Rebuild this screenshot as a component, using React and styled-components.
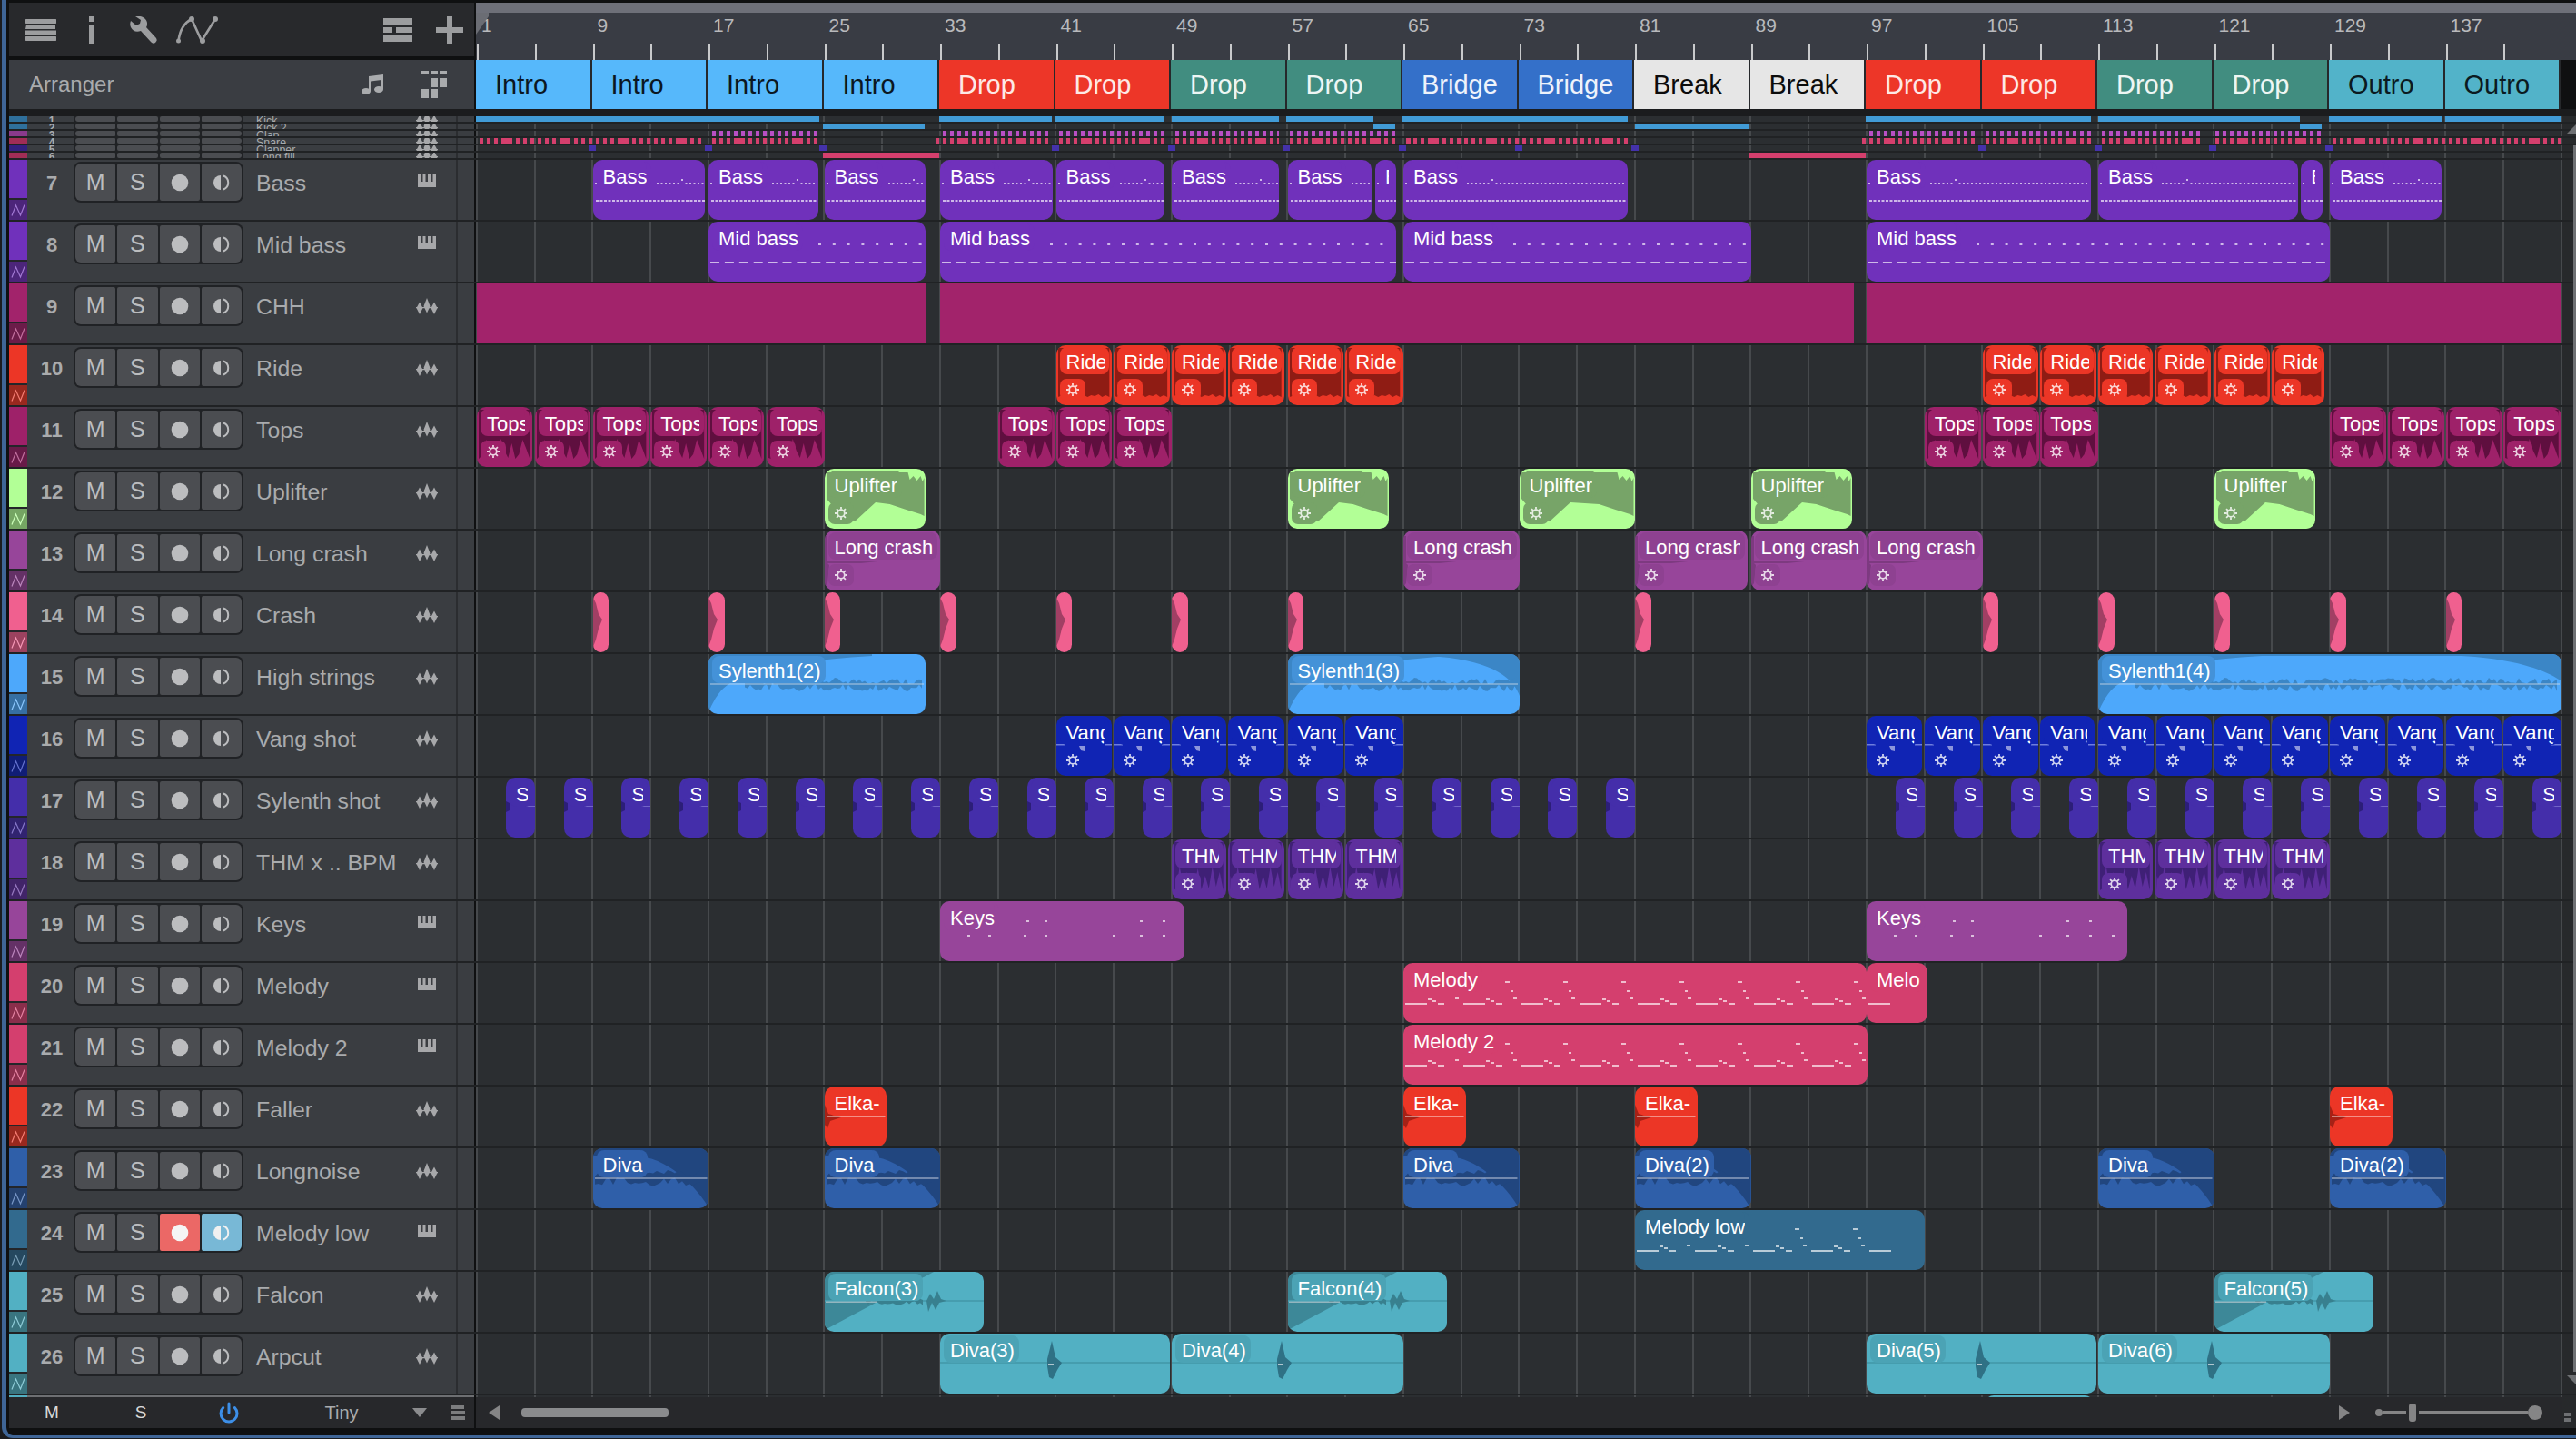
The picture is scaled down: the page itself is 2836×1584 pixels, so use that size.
import React from "react";
import styled, { createGlobalStyle } from "styled-components";
import { Power } from "lucide-react";

const BAR = 15.9375;
const xOf = (bar) => 1 + (bar - 1) * BAR;

const GlobalStyle = createGlobalStyle`
  html, body {
    margin: 0;
    padding: 0;
    background: #1b1c1f;
  }
  body {
    font-family: "Liberation Sans", Arial, sans-serif;
    overflow: hidden;
  }
`;

const Frame = styled.div`
  width: 2836px;
  height: 1584px;
  box-sizing: border-box;
  padding: 0 0 1px 2px;
`;

const Window = styled.div`
  position: relative;
  height: 100%;
  box-sizing: border-box;
  border-left: 5px solid #3f6596;
  border-bottom: 3px solid #3f6596;
  border-bottom-left-radius: 12px;
  background: #0f1011;
  padding: 3px 0 8px 3px;
  overflow: hidden;
`;

const Head = styled.div`
  display: grid;
  grid-template-columns: 514px 1fr;
  height: 117px;
`;

const HeadLeft = styled.div`
  display: flex;
  flex-direction: column;
  gap: 4px;
  border-right: 2px solid #0f1011;
`;

const Toolbar = styled.div`
  height: 59px;
  flex: none;
  background: #28292c;
  display: flex;
  align-items: center;
  padding: 0 12px 0 18px;
  color: #9c9d9f;
`;

const ToolIcon = styled.svg`
  display: block;
  flex: none;
  margin-left: ${(p) => p.$gap || 0}px;
`;

const Spacer = styled.div`
  flex: 1;
`;

const ArrangerBar = styled.div`
  height: 54px;
  background: #3a3d42;
  display: flex;
  align-items: center;
  padding-left: 22px;
  padding-right: 30px;
  font-size: 24px;
  color: #a9abad;
`;

const HeadRight = styled.div`
  display: flex;
  flex-direction: column;
  min-width: 0;
`;

const Ruler = styled.div`
  position: relative;
  height: 63px;
  flex: none;
  background: #393c44;
  border-top: 11px solid #6e7079;
  box-sizing: border-box;
  display: flex;
  padding-left: 1px;
`;

const Marker = styled.svg`
  position: absolute;
  left: 0;
  top: 0;
`;

const BarCell = styled.div`
  width: 127.5px;
  flex: none;
  display: flex;
  flex-direction: column;
  justify-content: space-between;
`;

const BarNumber = styled.span`
  font-size: 21px;
  line-height: 22px;
  margin: 3px 0 0 5px;
  color: #b8b9bc;
`;

const TickRow = styled.div`
  display: flex;
  height: 18px;
`;

const Tick = styled.i`
  display: block;
  width: 50%;
  box-sizing: border-box;
  border-left: 2px solid #c9cacc;
`;

const Sections = styled.div`
  display: flex;
  height: 54px;
  flex: none;
`;

const Section = styled.div`
  width: 127.5px;
  flex: none;
  box-sizing: border-box;
  border-right: 2px solid #26282b;
  background: ${(p) => p.$bg};
  color: ${(p) => p.$fg};
  font-size: 29px;
  line-height: 54px;
  padding-left: 21px;
`;

const HeadGap = styled.div`
  height: 8px;
  background: #1b1c1e;
`;

const Tracks = styled.div`
  display: flex;
  flex-direction: column;
  gap: 2px;
  background: #202224;
`;

const Row = styled.div`
  display: grid;
  grid-template-columns: 514px 2297px 1fr;
  height: ${(p) => (p.$tiny ? 6 : 66)}px;
`;

const PeekRow = styled(Row)`
  height: 2px;
`;

const TrackHeader = styled.div`
  display: flex;
  align-items: flex-start;
  box-sizing: border-box;
  background: #3a3d41;
  border-right: 2px solid #0f1011;
  overflow: hidden;
  height: 100%;
`;

const PeekHeader = styled(TrackHeader)`
  background: #6d6f72;
`;

const Swatch = styled.div`
  width: 20px;
  flex: none;
  height: 100%;
  display: flex;
  flex-direction: column;
  gap: 2px;
  background: #24262a;
`;

const SwatchTop = styled.div`
  flex: 1;
  background: ${(p) => p.$color};
`;

const SwatchBottom = styled.div`
  height: 22px;
  flex: none;
  display: flex;
  align-items: center;
  justify-content: center;
  background: color-mix(in srgb, ${(p) => p.$color} 62%, #111);
  color: color-mix(in srgb, ${(p) => p.$color} 65%, #fff);
`;

const TrackNumber = styled.div`
  width: 51px;
  flex: none;
  text-align: center;
  font-size: ${(p) => (p.$tiny ? 12 : 22)}px;
  font-weight: 700;
  color: #a9abad;
  padding-left: 3px;
  box-sizing: border-box;
  line-height: ${(p) => (p.$tiny ? "12px" : "51px")};
  margin-top: ${(p) => (p.$tiny ? -1 : 0)}px;
`;

const ButtonGroup = styled.div`
  width: 187px;
  flex: none;
  box-sizing: border-box;
  display: flex;
  gap: 2px;
  height: ${(p) => (p.$tiny ? 6 : 45)}px;
  margin-top: ${(p) => (p.$tiny ? 0 : 2)}px;
  padding: ${(p) => (p.$tiny ? "0 2px" : "2px")};
  background: #202225;
  border-radius: ${(p) => (p.$tiny ? 0 : 8)}px;
`;

const TrackButton = styled.button`
  flex: 1;
  min-width: 0;
  margin: 0;
  padding: 0;
  border: none;
  display: flex;
  align-items: center;
  justify-content: center;
  background: ${(p) => p.$on || "#4b4d51"};
  color: #bcbdbf;
  font-family: inherit;
  font-size: 25px;
  border-radius: 2px;
  &:first-child {
    border-radius: 6px 2px 2px 6px;
  }
  &:last-child {
    border-radius: 2px 6px 6px 2px;
  }
`;

const TrackName = styled.div`
  flex: 1;
  min-width: 0;
  padding-left: 14px;
  font-size: ${(p) => (p.$tiny ? 12.4 : 24.8)}px;
  color: #a9abad;
  white-space: nowrap;
  line-height: ${(p) => (p.$tiny ? "12px" : "52px")};
  margin-top: ${(p) => (p.$tiny ? -1 : 0)}px;
`;

const KindIcon = styled.div`
  width: 24px;
  flex: none;
  margin-right: 20px;
  color: #a7a8aa;
  display: flex;
  justify-content: center;
  margin-top: ${(p) => (p.$tiny ? -6 : 0)}px;
  padding-top: ${(p) => (p.$tiny ? 0 : 16)}px;
`;

const Gutter = styled.div`
  width: 18px;
  flex: none;
  height: 100%;
  border-left: 2px solid #2b2d30;
`;

const Lane = styled.div`
  position: relative;
  overflow: hidden;
  background-color: #2b2e31;
  background-image: repeating-linear-gradient(
    to right,
    #46494c 0,
    #46494c 2px,
    transparent 2px,
    transparent 63.75px
  );
`;

const RightStrip = styled.div`
  background: #27292b;
`;

const TinyClip = styled.div`
  position: absolute;
  top: 0;
  height: 6px;
  background: ${(p) => p.$fill};
`;

const Clip = styled.div`
  position: absolute;
  top: 0;
  height: 66px;
  display: flex;
  flex-direction: column;
  align-items: flex-start;
  padding-top: 2px;
  box-sizing: border-box;
  overflow: hidden;
  border-radius: ${(p) => (p.$flat ? 0 : 10)}px;
  background: ${(p) => p.$color};
  color: #fff;
`;

const Art = styled.svg`
  position: absolute;
  left: 0;
  top: 0;
`;

const ClipLabel = styled.div`
  position: relative;
  box-sizing: border-box;
  max-width: calc(100% - 7px);
  flex: none;
  margin-left: 4px;
  padding-left: 7px;
  height: 30px;
  line-height: 33px;
  font-size: 22px;
  white-space: nowrap;
  overflow: hidden;
  border-radius: 8px;
  border-right: 5px solid ${(p) => p.$chip};
  background: ${(p) => p.$chip};
`;

const GearChip = styled.div`
  position: relative;
  width: 28px;
  height: 24px;
  flex: none;
  margin: 5px 0 0 4px;
  display: flex;
  align-items: center;
  justify-content: center;
  border-radius: 7px;
  background: ${(p) => p.$chip};
`;

const Footer = styled.div`
  display: grid;
  grid-template-columns: 514px 2297px 1fr;
  height: 34px;
  background: #27282b;
`;

const FooterLeft = styled.div`
  display: flex;
  align-items: center;
  border-right: 2px solid #0f1011;
  color: #a9abad;
  font-size: 20px;
`;

const FooterCell = styled.div`
  width: ${(p) => p.$w}px;
  flex: none;
  text-align: center;
  font-size: ${(p) => p.$size || 20}px;
  color: ${(p) => p.$fg || "#a9abad"};
  display: flex;
  justify-content: center;
  box-sizing: border-box;
`;

const FooterRight = styled.div`
  display: flex;
  align-items: center;
  padding-left: 14px;
  padding-right: 14px;
`;

const ScrollThumb = styled.div`
  width: 162px;
  height: 10px;
  margin-left: 24px;
  border-radius: 4px;
  background: #8a8b8d;
`;

const ZoomTrack = styled.div`
  display: flex;
  align-items: center;
  width: 184px;
  margin-left: 28px;
  margin-right: 8px;
  flex: none;
`;

const ZoomDot = styled.div`
  width: ${(p) => p.$size}px;
  height: ${(p) => p.$size}px;
  flex: none;
  border-radius: 50%;
  background: #858586;
`;

const ZoomLine = styled.div`
  height: 4px;
  flex: ${(p) => p.$grow};
  background: #858586;
`;

const ZoomHandle = styled.div`
  width: 8px;
  height: 20px;
  margin: 0 3px;
  flex: none;
  border-radius: 3px;
  background: #858586;
`;

const VScroll = styled.svg`
  position: absolute;
  right: 0;
  top: 0;
`;

// small drawings

const GearIcon = () => (
  <svg width="16" height="16" viewBox="0 0 16 16" stroke="rgba(255,255,255,.8)" fill="none">
    <circle cx="8" cy="8" r="3.8" strokeWidth="1.8" />
    {[0, 45, 90, 135, 180, 225, 270, 315].map((a) => (
      <line key={a} x1="8" y1="3.6" x2="8" y2="1" strokeWidth="1.8" transform={`rotate(${a} 8 8)`} />
    ))}
  </svg>
);

const PianoIcon = () => (
  <svg width="20" height="14" viewBox="0 0 20 14" fill="currentColor" style={{ display: "block" }}>
    <path d="M0 0h3v8h2.5V0h3v8H11V0h3v8h2.5V0H20v14H0z" />
  </svg>
);

const WaveIcon = () => (
  <svg width="24" height="18" viewBox="0 0 24 18" fill="currentColor" style={{ display: "block" }}>
    <path d="M4 4.500l3.500 6.500L4 18 .5 11zM12 0l3.500 9L12 16.500 8.500 9zM20 4.500l3.500 6.500L20 18l-3.500-7z" />
    <path d="M0 10h24v1.200H0z" />
  </svg>
);

const MonitorIcon = ({ fill }) => (
  <svg width="20" height="20" viewBox="0 0 20 20">
    <path d="M9 2a8 8 0 0 0 0 16z" fill={fill} />
    <path d="M12 2.500a8 8 0 0 1 0 15" fill="none" stroke={fill} strokeWidth="2" />
  </svg>
);

const RecordDot = ({ fill }) => (
  <svg width="20" height="20" viewBox="0 0 20 20">
    <circle cx="10" cy="10" r="9.300" fill={fill} />
  </svg>
);

const noise = (i) => Math.abs(Math.sin(i * 12.9898) * 43758.5453) % 1;

const band = (x0, x1, yc, up, down, seed = 1, step = 3) => {
  const top = [];
  const bottom = [];
  for (let x = x0, i = seed; x <= x1; x += step, i++) {
    top.push(`${x},${(yc - noise(i) * up).toFixed(1)}`);
    bottom.unshift(`${x},${(yc + noise(i + 50) * down).toFixed(1)}`);
  }
  return [...top, ...bottom].join(" ");
};

const spiky = (w, peaks, left = 2, right = 3, top = 3) => {
  const pts = [`${left},${top}`, `${w - right},${top}`];
  const n = Math.floor((w - left - right) / 4);
  for (let i = 0; i <= n; i++) {
    const x = w - right - i * 4;
    pts.push(`${x},${peaks[i % peaks.length]}`);
  }
  pts.push(`${left},56`);
  return pts.join(" ");
};

const rects = (items, fill) =>
  items.map(([x, y, w, h = 2], i) => <rect key={i} x={x} y={y} width={w} height={h} fill={fill} />);

const steps = (from, to, step) => {
  const out = [];
  for (let x = from; x < to; x += step) out.push(x);
  return out;
};

const NOTE = "rgba(255,255,255,.66)";

const melodyBits = (w, { limit = w - 2, topFrom = 0 }) => {
  const items = [];
  for (let c = 0; c * 64 < w; c++) {
    const o = c * 64;
    items.push([o + 2, 44, 24], [o + 27, 39, 4], [o + 32, 41, 4], [o + 38, 44, 7], [o + 57, 38, 4]);
    if (c >= topFrom) items.push([o + 48, 20, 5], [o + 54, 30, 3]);
  }
  return items.filter((it) => it[0] < limit);
};

const ART = {
  bass: (w) =>
    rects(
      [
        [2, 25, 2],
        ...steps(70, w - 2, 4.5).map((x) => [x, Math.abs(x - 97) < 2.2 ? 21 : 25, 2]),
        ...steps(3, w - 2, 4.5).map((x) => [x, 44, 3]),
      ],
      NOTE
    ),
  midbass: (w) =>
    rects(
      [...steps(121, w - 2, 15.8).map((x) => [x, 24, 3]), ...steps(2, w - 2, 15.9).map((x) => [x, 44, 10])],
      NOTE
    ),
  melody: (w, c) => rects(melodyBits(w, c), NOTE),
  keys: () =>
    rects(
      [95, 115, 220, 245].map((x) => [x, 21, 3]).concat([30, 53, 92, 115, 190, 220, 245, 270].map((x) => [x, 37, 3])),
      NOTE
    ),
  ride: (w) => <polygon points={spiky(w, [57, 55, 57, 54, 56, 55], 2, 3)} fill="#8f1c14" />,
  tops: (w) => <polygon points={spiky(w, [57, 46, 36, 52, 57, 40, 56, 48, 35, 54], 2, 3)} fill="#5f0f3f" />,
  thm: (w) => <polygon points={spiky(w, [56, 36, 52, 30, 54, 40, 55, 32, 50], 2, 3)} fill="#3f2076" />,
  uplifter: (w) => (
    <polygon
      fill="#77a468"
      points={`2,4 ${w - 20},4 ${w - 18},12 ${w - 14},8 ${w - 10},13 ${w - 6},8 ${w - 4},14 ${w - 2},10 ${w - 2},52 ${
        w - 6
      },50 ${w - 22},45 ${w - 40},39 56,37 33,58 8,40 2,33`}
    />
  ),
  longcrash: () => <polygon fill="#7d3a80" points="0,6 3,6 3,33 58,34 40,36 3,36 5,38 3,58 0,62" />,
  crash: () => <polygon fill="#a13f64" points="0,6 3,12 6,24 10,30 6,40 3,52 0,60" />,
  vang: (w) => (
    <>
      <rect x="0" y="31" width="10" height="1.5" fill="rgba(190,200,255,.55)" />
      <rect x="53" y="31" width={w} height="1.5" fill="rgba(190,200,255,.55)" />
      <polygon points="25,33 31,33 31,39 27,38" fill="#8d96db" />
    </>
  ),
  shot: () => (
    <>
      <polygon points="0,26 4,28 4,36 0,38" fill="#2c1e78" />
      <rect x="22" y="31" width="10" height="1" fill="rgba(200,200,255,.35)" />
    </>
  ),
  sylenth: (w, c) => (
    <>
      <path
        fill="#3b86c6"
        d={
          c.fadeOut
            ? `M0 64C8 46 14 38 24 32C60 12 120 6 180 2L${w - c.fadeOut} 2C${w - c.fadeOut / 3} 6 ${w - 8} 24 ${w} ${
                c.fadeEnd
              }V0H0z`
            : `M0 64C8 46 14 38 24 32C60 12 120 6 180 2V0H0z`
        }
      />
      <polygon points={band(40, w - 3, 33, 7, 8, 3)} fill="#3b86c6" />
      <rect x="2" y="32" width={w - 4} height="2" fill="rgba(205,220,230,.42)" />
    </>
  ),
  diva: (w) => (
    <>
      <path fill="#21467f" d={`M0 0H${w}V66C${w - 15} 40 ${w - 45} 14 ${w - 70} 10L0 8z`} />
      <polygon points={band(2, w - 8, 32, 8, 10, 7, 4)} fill="#21467f" />
      <rect x="2" y="32" width={w - 4} height="2" fill="rgba(205,212,225,.48)" />
    </>
  ),
  elka: (w) => (
    <>
      <polygon points="0,20 4,30 18,34 6,38 3,46 0,42" fill="#a62116" />
      <rect x="2" y="32" width={w - 4} height="2" fill="rgba(255,255,255,.45)" />
    </>
  ),
  falcon: (w) => (
    <>
      <polygon points="0,64 120,0 0,0" fill="#3d8898" />
      <rect x="0" y="31" width={w} height="2" fill="#469daf" />
      <polygon points={band(45, 110, 32, 3, 5, 11)} fill="#38808f" />
      <polygon points="112,32 116,24 120,30 124,21 128,30 134,32 126,34 122,42 118,34 114,44" fill="#38808f" />
      <rect x="1" y="32.500" width="56" height="1.500" fill="rgba(205,212,215,.6)" />
    </>
  ),
  arp: (w, c) => {
    const x = c.blob;
    return (
      <>
        <rect x="0" y="31" width={w} height="2" fill="#459dae" />
        <polygon
          fill="#2f7185"
          points={`${x},8 ${x + 4},26 ${x + 11},32 ${x + 6},40 ${x + 1},50 ${x - 3},48 ${x - 5},36 ${x - 5},28`}
        />
        <rect x={x - 4} y="33" width="6" height="1.500" fill="rgba(210,220,225,.8)" />
      </>
    );
  },
};

const ranges = (label, list) => list.map(([from, to, extra]) => ({ from, to, label, ...extra }));

const RIDES = [
  [41, 44.85],
  [45, 48.9],
  [49, 52.75],
  [52.88, 56.75],
  [57, 60.85],
  [61, 64.97],
];
const RIDES_B = [
  [105, 108.85],
  [109, 112.9],
  [113, 116.75],
  [116.88, 120.75],
  [121, 124.85],
  [125, 128.6],
];
const VANGS_B = [
  [97, 100.85],
  [101, 104.85],
  [105, 108.85],
  [109, 112.75],
  [113, 116.85],
  [117, 120.85],
  [121, 124.85],
  [125, 128.85],
  [129, 132.85],
  [133, 136.85],
  [137, 140.85],
  [141, 145],
];
const THM_BARS = [
  [49, 52.75],
  [52.88, 56.75],
  [57, 60.85],
  [61, 64.97],
  [113, 116.75],
  [116.88, 120.75],
  [121, 124.85],
  [125, 129],
];

const shots = [...steps(3, 80, 4), ...steps(99, 144, 4)].map((b) => [b, b + 2]);
const crashes = [9, 17, 25, 33, 41, 49, 57, 81, 105, 113, 121, 129, 137].map((b) => [b, b + 1.1]);

const TINY_TRACKS = [
  {
    n: 1,
    name: "Kick",
    color: "#2f709c",
    fill: "#419bd6",
    spans: [
      [524, 902],
      [1034, 1158],
      [1162, 1282],
      [1290, 1408],
      [1416, 1512],
      [1544, 1792],
      [2054, 2302],
      [2310, 2532],
      [2564, 2688],
      [2692, 2820],
    ],
  },
  {
    n: 2,
    name: "Kick 2",
    color: "#2f709c",
    fill: "#419bd6",
    spans: [
      [906, 1018],
      [1512, 1536],
      [1800, 1926],
      [2532, 2556],
    ],
  },
  {
    n: 3,
    name: "Clap",
    color: "#8a3a8c",
    fill: "repeating-linear-gradient(to right, #b94fc4 0, #b94fc4 4.5px, transparent 4.5px, transparent 8px)",
    spans: [
      [784, 899],
      [1038, 1154],
      [1166, 1282],
      [1294, 1408],
      [1420, 1536],
      [2058, 2174],
      [2186, 2302],
      [2314, 2427],
      [2439, 2556],
    ],
  },
  {
    n: 4,
    name: "Snare",
    color: "#a12d56",
    fill: "repeating-linear-gradient(to right, #d53f6d 0, #d53f6d 4.5px, transparent 4.5px, transparent 8px), repeating-linear-gradient(to right, transparent 0, transparent 24px, #d53f6d 24px, #d53f6d 36px, transparent 36px, transparent 64px)",
    spans: [
      [528, 772],
      [784, 899],
      [1030, 1154],
      [1166, 1282],
      [1294, 1408],
      [1420, 1536],
      [1548, 1792],
      [2050, 2174],
      [2186, 2302],
      [2314, 2427],
      [2439, 2556],
      [2568, 2820],
    ],
  },
  {
    n: 5,
    name: "Clapper",
    color: "#33207f",
    fill: "#4432ab",
    spans: [648, 776, 902, 1158, 1286, 1412, 1540, 1668, 1796, 2178, 2306, 2432, 2560].map((x) => [x, x + 8]),
  },
  {
    n: 6,
    name: "Long fill",
    color: "#a12d56",
    fill: "#d53f6d",
    spans: [
      [906, 1034],
      [1926, 2054],
    ],
  },
];

const TRACKS = [
  {
    n: 7,
    name: "Bass",
    color: "#7031bb",
    icon: "piano",
    art: "bass",
    clips: ranges("Bass", [
      [9, 16.75],
      [17, 24.6],
      [25, 32],
      [33, 40.75],
      [41, 48.5],
      [49, 56.4],
      [57, 62.8],
      [63.05, 64.5],
      [65, 80.5],
      [97, 112.5],
      [113, 126.8],
      [127, 128.5],
      [129, 136.7],
    ]),
  },
  {
    n: 8,
    name: "Mid bass",
    color: "#7031bb",
    icon: "piano",
    art: "midbass",
    clips: ranges("Mid bass", [
      [17, 32],
      [33, 64.5],
      [65, 89],
      [97, 129],
    ]),
  },
  {
    n: 9,
    name: "CHH",
    color: "#a2236b",
    flat: true,
    clips: ranges(null, [
      [1, 32.06],
      [33, 96.1],
      [97, 145],
    ]),
  },
  {
    n: 10,
    name: "Ride",
    color: "#ec3626",
    art: "ride",
    gear: true,
    clips: ranges("Ride", [...RIDES, ...RIDES_B]),
  },
  {
    n: 11,
    name: "Tops",
    color: "#9e2169",
    art: "tops",
    gear: true,
    clips: ranges("Tops", [
      [1, 4.85],
      [5, 8.85],
      [9, 12.85],
      [13, 16.9],
      [17, 20.85],
      [21, 25],
      [37, 40.9],
      [41, 44.85],
      [45, 49],
      [101, 104.9],
      [105, 108.9],
      [109, 113],
      [129, 132.9],
      [133, 136.9],
      [137, 140.9],
      [141, 145],
    ]),
  },
  {
    n: 12,
    name: "Uplifter",
    color: "#b2ff96",
    chip: "#77a468",
    art: "uplifter",
    gear: true,
    clips: ranges("Uplifter", [
      [25, 32],
      [57, 64],
      [73, 81],
      [89, 96],
      [121, 128],
    ]),
  },
  {
    n: 13,
    name: "Long crash",
    color: "#97459a",
    chip: "#8e4191",
    art: "longcrash",
    gear: true,
    clips: ranges("Long crash", [
      [25, 33],
      [65, 73],
      [81, 88.8],
      [89, 97],
      [97, 105],
    ]),
  },
  {
    n: 14,
    name: "Crash",
    color: "#f0608f",
    art: "crash",
    clips: ranges(null, crashes),
  },
  {
    n: 15,
    name: "High strings",
    color: "#4da8fb",
    chip: "#4492d8",
    art: "sylenth",
    clips: [
      { from: 17, to: 32, label: "Sylenth1(2)" },
      { from: 57, to: 73, label: "Sylenth1(3)", fadeOut: 100, fadeEnd: 46 },
      { from: 113, to: 145, label: "Sylenth1(4)", fadeOut: 110, fadeEnd: 30 },
    ],
  },
  {
    n: 16,
    name: "Vang shot",
    color: "#1024b4",
    art: "vang",
    gear: true,
    gearChip: "transparent",
    clips: ranges("Vang", [...RIDES.slice(0, 5), [61, 65], ...VANGS_B]),
  },
  {
    n: 17,
    name: "Sylenth shot",
    color: "#442eaa",
    art: "shot",
    clips: ranges("S", shots),
  },
  {
    n: 18,
    name: "THM x .. BPM",
    color: "#5e2f9d",
    art: "thm",
    gear: true,
    clips: ranges("THM", THM_BARS),
  },
  {
    n: 19,
    name: "Keys",
    color: "#97459a",
    icon: "piano",
    art: "keys",
    clips: ranges("Keys", [
      [33, 49.9],
      [97, 115],
    ]),
  },
  {
    n: 20,
    name: "Melody",
    color: "#d43f6e",
    icon: "piano",
    art: "melody",
    clips: [
      { from: 65, to: 97, label: "Melody" },
      { from: 97, to: 101.2, label: "Melo", limit: 2.5 },
    ],
  },
  {
    n: 21,
    name: "Melody 2",
    color: "#d43f6e",
    icon: "piano",
    art: "melody",
    clips: [{ from: 65, to: 97.05, label: "Melody 2" }],
  },
  {
    n: 22,
    name: "Faller",
    color: "#ec3626",
    art: "elka",
    clips: ranges("Elka-", [
      [25, 29.3],
      [65, 69.3],
      [81, 85.3],
      [129, 133.3],
    ]),
  },
  {
    n: 23,
    name: "Longnoise",
    color: "#2f5fa9",
    art: "diva",
    clips: [
      { from: 9, to: 17, label: "Diva" },
      { from: 25, to: 33, label: "Diva" },
      { from: 65, to: 73, label: "Diva" },
      { from: 81, to: 89, label: "Diva(2)" },
      { from: 113, to: 121, label: "Diva" },
      { from: 129, to: 137, label: "Diva(2)" },
    ],
  },
  {
    n: 24,
    name: "Melody low",
    color: "#326a8e",
    icon: "piano",
    active: true,
    art: "melody",
    clips: [{ from: 81, to: 101, label: "Melody low", limit: 260, topFrom: 2 }],
  },
  {
    n: 25,
    name: "Falcon",
    color: "#52b0c3",
    chip: "#4ba3b5",
    art: "falcon",
    clips: [
      { from: 25, to: 36, label: "Falcon(3)" },
      { from: 57, to: 68, label: "Falcon(4)" },
      { from: 121, to: 132, label: "Falcon(5)" },
    ],
  },
  {
    n: 26,
    name: "Arpcut",
    color: "#52b0c3",
    chip: "#4ba3b5",
    art: "arp",
    clips: [
      { from: 33, to: 48.9, label: "Diva(3)", blob: 123 },
      { from: 49, to: 65, label: "Diva(4)", blob: 121 },
      { from: 97, to: 112.9, label: "Diva(5)", blob: 125 },
      { from: 113, to: 129, label: "Diva(6)", blob: 125 },
    ],
  },
];

const SECTIONS = [
  ...Array(4).fill(["Intro", "#56b8fb", "#0b1722"]),
  ...Array(2).fill(["Drop", "#ed3628", "#fde9e6"]),
  ...Array(2).fill(["Drop", "#418d80", "#eef6f4"]),
  ...Array(2).fill(["Bridge", "#3470c9", "#eef3fb"]),
  ...Array(2).fill(["Break", "#e6e6e6", "#0c0c0c"]),
  ...Array(2).fill(["Drop", "#ed3628", "#fde9e6"]),
  ...Array(2).fill(["Drop", "#418d80", "#eef6f4"]),
  ...Array(2).fill(["Outro", "#52b3c9", "#0b1a20"]),
];

function Buttons({ tiny, active }) {
  if (tiny) {
    return (
      <ButtonGroup $tiny>
        <TrackButton />
        <TrackButton />
        <TrackButton />
        <TrackButton />
      </ButtonGroup>
    );
  }
  return (
    <ButtonGroup>
      <TrackButton>M</TrackButton>
      <TrackButton>S</TrackButton>
      <TrackButton $on={active ? "#eb6866" : undefined}>
        <RecordDot fill={active ? "#f5f5f5" : "#bcbdbf"} />
      </TrackButton>
      <TrackButton $on={active ? "#78b8d6" : undefined}>
        <MonitorIcon fill={active ? "#f0f0f0" : "#bcbdbf"} />
      </TrackButton>
    </ButtonGroup>
  );
}

function TimelineClip({ track, clip }) {
  const width = (clip.to - clip.from) * BAR;
  const chip = track.chip || track.color;
  return (
    <Clip $color={track.color} $flat={track.flat} style={{ left: xOf(clip.from), width }}>
      {track.art && (
        <Art width={width} height="66" viewBox={`0 0 ${width} 66`}>
          {ART[track.art](width, clip)}
        </Art>
      )}
      {clip.label && <ClipLabel $chip={chip}>{clip.label}</ClipLabel>}
      {track.gear && (
        <GearChip $chip={track.gearChip || chip}>
          <GearIcon />
        </GearChip>
      )}
    </Clip>
  );
}

function Track({ track }) {
  return (
    <Row>
      <TrackHeader>
        <Swatch>
          <SwatchTop $color={track.color} />
          <SwatchBottom $color={track.color}>
            <svg width="16" height="16" viewBox="0 0 16 16" fill="none" stroke="currentColor" strokeWidth="1.2">
              <path d="M1 14.500L5.500 3l5 11L15 2.500" />
            </svg>
          </SwatchBottom>
        </Swatch>
        <TrackNumber>{track.n}</TrackNumber>
        <Buttons active={track.active} />
        <TrackName>{track.name}</TrackName>
        <KindIcon>{track.icon === "piano" ? <PianoIcon /> : <WaveIcon />}</KindIcon>
        <Gutter />
      </TrackHeader>
      <Lane>
        {track.clips.map((clip, i) => (
          <TimelineClip key={i} track={track} clip={clip} />
        ))}
      </Lane>
      <RightStrip />
    </Row>
  );
}

function TinyTrack({ track }) {
  return (
    <Row $tiny>
      <TrackHeader>
        <Swatch>
          <SwatchTop $color={track.color} />
        </Swatch>
        <TrackNumber $tiny>{track.n}</TrackNumber>
        <Buttons tiny />
        <TrackName $tiny>{track.name}</TrackName>
        <KindIcon $tiny>
          <WaveIcon />
        </KindIcon>
        <Gutter />
      </TrackHeader>
      <Lane>
        {track.spans.map(([a, b], i) => (
          <TinyClip key={i} $fill={track.fill} style={{ left: a - 524, width: b - a }} />
        ))}
      </Lane>
      <RightStrip />
    </Row>
  );
}

export default function App() {
  return (
    <Frame>
      <GlobalStyle />
      <Window>
        <Head>
          <HeadLeft>
            <Toolbar>
              <ToolIcon width="34" height="24" viewBox="0 0 34 24" fill="currentColor">
                <path d="M1 0h32a1 1 0 0 1 0 5H1a1 1 0 0 1 0-5zM1 6.300h32v4.700H0zM0 12.600h34v4.700H0zM1 19h32a1 1 0 0 1 0 5H1a1 1 0 0 1 0-5z" />
              </ToolIcon>
              <ToolIcon $gap={36} width="6" height="30" viewBox="0 0 6 30" fill="currentColor">
                <path d="M0 0h6v6H0zM0 10h6v20H0z" />
              </ToolIcon>
              <ToolIcon $gap={39} width="30" height="30" viewBox="0 0 30 30" fill="currentColor">
                <path d="M1 5l6 5 4-2 1-4-6-4C11-1 18 1 19 7c0 2 0 4-1 5l11 12c1 2 1 3-1 5-2 1-3 1-5-1L12 16c-5 2-9 0-11-4-1-2-1-5 0-7z" />
              </ToolIcon>
              <ToolIcon $gap={21} width="46" height="30" viewBox="0 0 46 30" fill="none" stroke="currentColor" strokeWidth="2.6">
                <path d="M2.500 27C4 15 9 7 17 3l11 24L43 3" />
                <g fill="currentColor" stroke="none">
                  <circle cx="2.500" cy="27" r="2.500" />
                  <circle cx="17" cy="3" r="3" />
                  <circle cx="29" cy="27" r="3" />
                  <circle cx="43" cy="3" r="3" />
                </g>
              </ToolIcon>
              <Spacer />
              <ToolIcon width="32" height="26" viewBox="0 0 32 26" fill="currentColor">
                <path d="M0 0h32v7H0zM0 10h10v6H0zM14 10h18v6H14zM0 19h32v7H0z" />
              </ToolIcon>
              <ToolIcon $gap={26} width="30" height="30" viewBox="0 0 30 30" fill="currentColor">
                <path d="M12 0h6v12h12v6H18v12h-6V18H0v-6h12z" />
              </ToolIcon>
            </Toolbar>
            <ArrangerBar>
              Arranger
              <Spacer />
              <ToolIcon width="24" height="22" viewBox="0 0 24 22" fill="currentColor">
                <ellipse cx="5" cy="18.500" rx="5" ry="3.500" />
                <ellipse cx="19" cy="16.500" rx="5" ry="3.500" />
                <path d="M8 18V2l16-2v16h-2V6L10 7.500V18z" />
              </ToolIcon>
              <ToolIcon $gap={42} width="28" height="30" viewBox="0 0 28 30" fill="currentColor">
                <path d="M0 0h8v4H0zM10 0h8v4h-8zM20 0h8v4h-8zM10 8h8v10h-8zM20 8h8v10h-8zM0 20h8v10H0zM10 20h8v10h-8z" />
              </ToolIcon>
            </ArrangerBar>
          </HeadLeft>
          <HeadRight>
            <Ruler>
              <Marker width="14" height="28" viewBox="0 0 14 28">
                <polygon points="0,0 14,0 14,4 0,24" fill="#6b6d74" />
              </Marker>
              {SECTIONS.map((_, i) => (
                <BarCell key={i}>
                  <BarNumber>{i * 8 + 1}</BarNumber>
                  <TickRow>
                    <Tick />
                    <Tick />
                  </TickRow>
                </BarCell>
              ))}
            </Ruler>
            <Sections>
              {SECTIONS.map(([name, bg, fg], i) => (
                <Section key={i} $bg={bg} $fg={fg}>
                  {name}
                </Section>
              ))}
            </Sections>
          </HeadRight>
        </Head>
        <HeadGap />
        <Tracks>
          {TINY_TRACKS.map((t) => (
            <TinyTrack key={t.n} track={t} />
          ))}
          {TRACKS.map((t) => (
            <Track key={t.n} track={t} />
          ))}
          <PeekRow>
            <PeekHeader>
              <Swatch>
                <SwatchTop $color="#52b0c3" />
              </Swatch>
            </PeekHeader>
            <Lane>
              <Clip $color="#52b0c3" style={{ left: 2185 - 524, width: 120 }} />
            </Lane>
            <RightStrip />
          </PeekRow>
        </Tracks>
        <Footer>
          <FooterLeft>
            <FooterCell $w={94} $size={19} $fg="#d8d8d8">
              M
            </FooterCell>
            <FooterCell $w={102} $size={19} $fg="#d8d8d8">
              S
            </FooterCell>
            <FooterCell $w={92} $fg="#3d8fe8">
              <Power size={24} strokeWidth={3} />
            </FooterCell>
            <FooterCell $w={156}>Tiny</FooterCell>
            <ToolIcon width="16" height="10" viewBox="0 0 16 10" fill="#8b8c8e">
              <path d="M0 0h16L8 10z" />
            </ToolIcon>
            <ToolIcon $gap={26} width="16" height="16" viewBox="0 0 16 16" fill="#7c7d7f">
              <path d="M1 0h14v4H1zM0 6h16v4H0zM0 12h16v4H0z" />
            </ToolIcon>
          </FooterLeft>
          <FooterRight>
            <ToolIcon width="12" height="16" viewBox="0 0 12 16" fill="#858586">
              <path d="M12 0v16L0 8z" />
            </ToolIcon>
            <ScrollThumb />
            <Spacer />
            <ToolIcon width="12" height="16" viewBox="0 0 12 16" fill="#858586">
              <path d="M0 0v16l12-8z" />
            </ToolIcon>
            <ZoomTrack>
              <ZoomDot $size={8} />
              <ZoomLine $grow={28} />
              <ZoomHandle />
              <ZoomLine $grow={130} />
              <ZoomDot $size={16} />
            </ZoomTrack>
          </FooterRight>
          <RightStrip />
        </Footer>
        <VScroll width="16" height="1569" viewBox="0 0 16 1569" fill="#6e7073">
          <polygon points="6,147 16,147 16,137" />
          <rect x="13" y="160" width="3" height="1350" />
          <polygon points="6,1514 16,1514 16,1524" />
          <path d="M3 1555h7v4H3zM3 1561h7v4H3z" />
        </VScroll>
      </Window>
    </Frame>
  );
}
